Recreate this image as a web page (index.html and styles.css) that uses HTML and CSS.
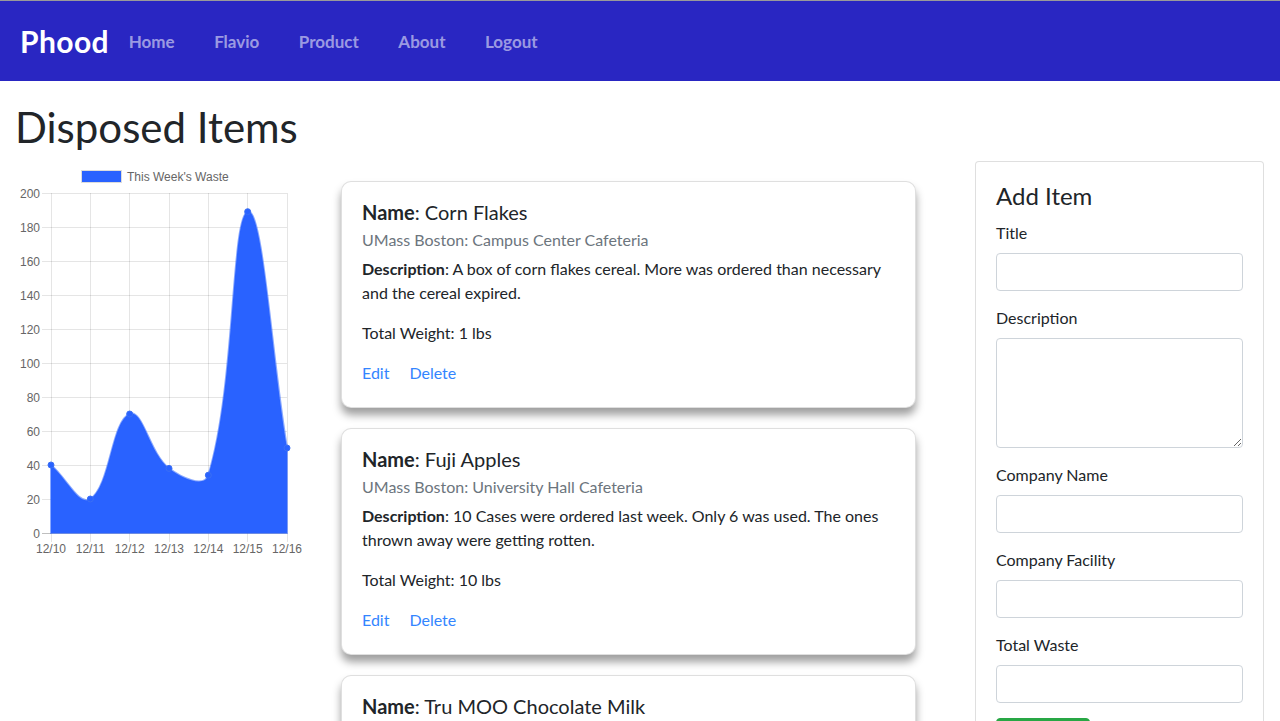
FILE: index.html
```html
<!DOCTYPE html>
<html lang="en">
<head>
<meta charset="utf-8">
<title>Phood</title>
<link rel="stylesheet" href="styles.css">
</head>
<body>
<nav class="navbar">
  <a class="brand" href="#">Phood</a>
  <ul class="nav">
    <li><a href="#">Home</a></li>
    <li><a href="#">Flavio</a></li>
    <li><a href="#">Product</a></li>
    <li><a href="#">About</a></li>
    <li><a href="#">Logout</a></li>
  </ul>
</nav>
<main class="page">
  <h1 class="page-title">Disposed Items</h1>
  <div class="row">
    <section class="chart-col">
      <svg class="chart" width="290" height="400" viewBox="16 161 290 400" xmlns="http://www.w3.org/2000/svg">
        <rect x="81.5" y="170.5" width="40" height="12" fill="#2962ff" stroke="#dcdcdc" stroke-width="1"/>
        <text x="127" y="181" class="legend-text">This Week's Waste</text>
        <g stroke="rgba(0,0,0,0.1)" stroke-width="1">
          <line x1="42" y1="193.5" x2="287" y2="193.5"/>
          <line x1="42" y1="227.5" x2="287" y2="227.5"/>
          <line x1="42" y1="261.5" x2="287" y2="261.5"/>
          <line x1="42" y1="295.5" x2="287" y2="295.5"/>
          <line x1="42" y1="329.5" x2="287" y2="329.5"/>
          <line x1="42" y1="363.5" x2="287" y2="363.5"/>
          <line x1="42" y1="397.5" x2="287" y2="397.5"/>
          <line x1="42" y1="431.5" x2="287" y2="431.5"/>
          <line x1="42" y1="465.5" x2="287" y2="465.5"/>
          <line x1="42" y1="499.5" x2="287" y2="499.5"/>
          <line x1="51.5" y1="193" x2="51.5" y2="542"/>
          <line x1="90.5" y1="193" x2="90.5" y2="542"/>
          <line x1="129.5" y1="193" x2="129.5" y2="542"/>
          <line x1="169.5" y1="193" x2="169.5" y2="542"/>
          <line x1="208.5" y1="193" x2="208.5" y2="542"/>
          <line x1="247.5" y1="193" x2="247.5" y2="542"/>
          <line x1="287.5" y1="193" x2="287.5" y2="542"/>
        </g>
        <line x1="42" y1="533.5" x2="287" y2="533.5" stroke="rgba(0,0,0,0.25)" stroke-width="1"/>
        <path d="M51,465 C66.73,478.6 79.10,506.28 90.33,499 C110.56,485.88 111.34,421.13 129.67,414 C142.81,408.89 149.27,453.05 169,468.4 C180.74,477.53 204.23,488.57 208.33,475.2 C235.70,385.89 231.10,217.43 247.67,211.7 C262.57,206.55 271.27,353.48 287,448 L287,533 L51,533 Z" fill="#2962ff" stroke="rgba(41,98,255,0.55)" stroke-width="2"/>
        <g fill="#2962ff" stroke="#3a6ff5" stroke-width="1">
          <circle cx="51" cy="465" r="3"/>
          <circle cx="90.33" cy="499" r="3"/>
          <circle cx="129.67" cy="414" r="3"/>
          <circle cx="169" cy="468.4" r="3"/>
          <circle cx="208.33" cy="475.2" r="3"/>
          <circle cx="247.67" cy="211.7" r="3"/>
          <circle cx="287" cy="448" r="3"/>
        </g>
        <g class="tick-y">
          <text x="40" y="197.5">200</text>
          <text x="40" y="231.5">180</text>
          <text x="40" y="265.5">160</text>
          <text x="40" y="299.5">140</text>
          <text x="40" y="333.5">120</text>
          <text x="40" y="367.5">100</text>
          <text x="40" y="401.5">80</text>
          <text x="40" y="435.5">60</text>
          <text x="40" y="469.5">40</text>
          <text x="40" y="503.5">20</text>
          <text x="40" y="537.5">0</text>
        </g>
        <g class="tick-x">
          <text x="51" y="553">12/10</text>
          <text x="90.33" y="553">12/11</text>
          <text x="129.67" y="553">12/12</text>
          <text x="169" y="553">12/13</text>
          <text x="208.33" y="553">12/14</text>
          <text x="247.67" y="553">12/15</text>
          <text x="287" y="553">12/16</text>
        </g>
      </svg>
    </section>

    <section class="cards-col">
      <article class="item-card">
        <h5 class="card-title"><b>Name</b>: Corn Flakes</h5>
        <h6 class="card-subtitle">UMass Boston: Campus Center Cafeteria</h6>
        <p class="card-text"><b>Description</b>: A box of corn flakes cereal. More was ordered than necessary and the cereal expired.</p>
        <p class="card-text">Total Weight: 1 lbs</p>
        <div class="card-links"><a href="#">Edit</a><a href="#">Delete</a></div>
      </article>
      <article class="item-card">
        <h5 class="card-title"><b>Name</b>: Fuji Apples</h5>
        <h6 class="card-subtitle">UMass Boston: University Hall Cafeteria</h6>
        <p class="card-text"><b>Description</b>: 10 Cases were ordered last week. Only 6 was used. The ones thrown away were getting rotten.</p>
        <p class="card-text">Total Weight: 10 lbs</p>
        <div class="card-links"><a href="#">Edit</a><a href="#">Delete</a></div>
      </article>
      <article class="item-card">
        <h5 class="card-title"><b>Name</b>: Tru MOO Chocolate Milk</h5>
        <h6 class="card-subtitle">UMass Boston: Campus Center Cafeteria</h6>
        <p class="card-text"><b>Description</b>: Cartons of chocolate milk that passed their expiration date.</p>
        <p class="card-text">Total Weight: 5 lbs</p>
        <div class="card-links"><a href="#">Edit</a><a href="#">Delete</a></div>
      </article>
    </section>

    <aside class="form-col">
      <form class="add-card">
        <h4 class="add-title">Add Item</h4>
        <div class="form-group">
          <label for="title">Title</label>
          <input id="title" class="form-control" type="text">
        </div>
        <div class="form-group">
          <label for="desc">Description</label>
          <textarea id="desc" class="form-control textarea"></textarea>
        </div>
        <div class="form-group">
          <label for="cname">Company Name</label>
          <input id="cname" class="form-control" type="text">
        </div>
        <div class="form-group">
          <label for="cfac">Company Facility</label>
          <input id="cfac" class="form-control" type="text">
        </div>
        <div class="form-group">
          <label for="waste">Total Waste</label>
          <input id="waste" class="form-control" type="text">
        </div>
        <button class="btn-submit" type="button">Submit</button>
      </form>
    </aside>
  </div>
</main>
</body>
</html>
```

FILE: styles.css
```css
* { box-sizing: border-box; }

html, body {
  margin: 0;
  padding: 0;
}

body {
  font-family: Lato, "Open Sans", "Liberation Sans", sans-serif;
  font-size: 16px;
  line-height: 1.5;
  color: #212529;
  background: #fff;
}

a { text-decoration: none; }

.navbar {
  height: 81px;
  background: #2926c2;
  border-top: 1px solid #9a9a9a;
  display: flex;
  align-items: center;
  padding: 0 20px;
}

.brand {
  color: #fff;
  font-size: 30px;
  font-weight: 700;
  letter-spacing: 0.4px;
  line-height: 1;
  margin-top: -1px;
  margin-right: 0;
}

.nav {
  list-style: none;
  display: flex;
  margin: 0;
  padding: 0;
}

.nav a {
  display: block;
  padding: 0 19.75px;
  margin-top: 2px;
  font-size: 17px;
  font-weight: 700;
  color: rgba(255, 255, 255, 0.55);
}

.page {
  padding: 0 16px;
}

.page-title {
  font-size: 42px;
  font-weight: 400;
  line-height: 48px;
  margin: 22px 0 10px -1px;
}

.row {
  display: flex;
  align-items: flex-start;
}

.chart-col {
  width: 290px;
  flex: none;
}

.chart { display: block; }

.legend-text {
  font-family: "Liberation Sans", Arial, sans-serif;
  font-size: 12px;
  fill: #666;
}

.tick-y text {
  font-family: "Liberation Sans", Arial, sans-serif;
  font-size: 12px;
  fill: #666;
  text-anchor: end;
}

.tick-x text {
  font-family: "Liberation Sans", Arial, sans-serif;
  font-size: 12px;
  fill: #666;
  text-anchor: middle;
}

.cards-col {
  width: 575px;
  flex: none;
  margin-left: 35px;
  padding-top: 20px;
  display: flex;
  flex-direction: column;
  gap: 20px;
}

.item-card {
  border: 1px solid rgba(0, 0, 0, 0.125);
  border-radius: 10px;
  padding: 18px 20px 22px;
  background: #fff;
  box-shadow: 0 7px 9px rgba(0, 0, 0, 0.38);
}

.card-title {
  margin: 0 0 12px;
  font-size: 20px;
  font-weight: 400;
  line-height: 24px;
}

.card-title b { font-weight: 700; }

.card-subtitle {
  margin: -6px 0 8px;
  font-size: 16px;
  font-weight: 400;
  line-height: 19.2px;
  color: #6c757d;
}

.card-text {
  margin: 0 0 16px;
}

.card-text b { font-weight: 700; }

.card-links {
  display: flex;
  gap: 20px;
}

.card-links a {
  color: #3385ff;
}

.form-col {
  width: 289px;
  flex: none;
  margin-left: auto;
}

.add-card {
  border: 1px solid rgba(0, 0, 0, 0.125);
  border-radius: 4px;
  padding: 20px 20px 20px;
  background: #fff;
}

.add-title {
  margin: 0 0 10px;
  font-size: 24px;
  font-weight: 400;
  line-height: 28.8px;
}

.form-group {
  margin-bottom: 15px;
}

.form-group label {
  display: block;
  margin-bottom: 8px;
}

.form-control {
  display: block;
  width: 100%;
  height: 38px;
  border: 1px solid #ced4da;
  border-radius: 4px;
  padding: 6px 12px;
  font: inherit;
  background: #fff;
}

.textarea {
  height: 110px;
  resize: vertical;
}

.btn-submit {
  display: block;
  width: 94px;
  height: 38px;
  border: 1px solid #28a745;
  border-radius: 4px;
  background: #28a745;
  color: #fff;
  font: inherit;
}
```
